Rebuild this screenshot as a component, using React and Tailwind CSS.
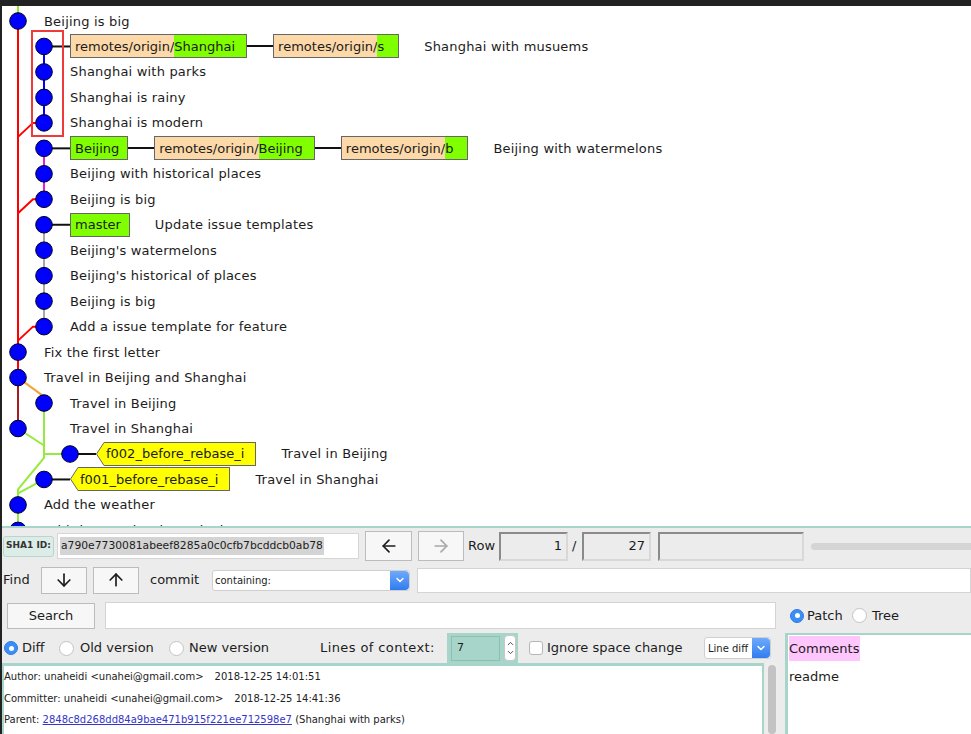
import { ArrowLeft, ArrowRight, ArrowDown, ArrowUp, ChevronDown, ChevronUp } from 'lucide-react';

// graph geometry (local to the graph pane)
const PITCH = 25.47;
const X0 = 16;
const X1 = 42;
const X2 = 68;
const LANES = [X0, X1, X2];
const y = (i) => 15 + PITCH * i;

const rows = [
  { lane: 0, pl: 'pl-[42px]', text: 'Beijing is big' },
  {
    lane: 1,
    pl: 'pl-[68px]',
    refs: [
      { t: 'remote', a: 'remotes/origin/', b: 'Shanghai' },
      { t: 'remote', a: 'remotes/origin/', b: 's' },
    ],
    text: 'Shanghai with musuems',
  },
  { lane: 1, pl: 'pl-[68px]', text: 'Shanghai with parks' },
  { lane: 1, pl: 'pl-[68px]', text: 'Shanghai is rainy' },
  { lane: 1, pl: 'pl-[68px]', text: 'Shanghai is modern' },
  {
    lane: 1,
    pl: 'pl-[68px]',
    refs: [
      { t: 'head', b: 'Beijing' },
      { t: 'remote', a: 'remotes/origin/', b: 'Beijing' },
      { t: 'remote', a: 'remotes/origin/', b: 'b' },
    ],
    text: 'Beijing with watermelons',
  },
  { lane: 1, pl: 'pl-[68px]', text: 'Beijing with historical places' },
  { lane: 1, pl: 'pl-[68px]', text: 'Beijing is big' },
  { lane: 1, pl: 'pl-[68px]', refs: [{ t: 'head', b: 'master' }], text: 'Update issue templates' },
  { lane: 1, pl: 'pl-[68px]', text: "Beijing's watermelons" },
  { lane: 1, pl: 'pl-[68px]', text: "Beijing's historical of places" },
  { lane: 1, pl: 'pl-[68px]', text: 'Beijing is big' },
  { lane: 1, pl: 'pl-[68px]', text: 'Add a issue template for feature' },
  { lane: 0, pl: 'pl-[42px]', text: 'Fix the first letter' },
  { lane: 0, pl: 'pl-[42px]', text: 'Travel in Beijing and Shanghai' },
  { lane: 1, pl: 'pl-[68px]', text: 'Travel in Beijing' },
  { lane: 0, pl: 'pl-[68px]', text: 'Travel in Shanghai' },
  { lane: 2, pl: 'pl-[94px]', refs: [{ t: 'tag', b: 'f002_before_rebase_i' }], text: 'Travel in Beijing' },
  { lane: 1, pl: 'pl-[68px]', refs: [{ t: 'tag', b: 'f001_before_rebase_i' }], text: 'Travel in Shanghai' },
  { lane: 0, pl: 'pl-[42px]', text: 'Add the weather' },
  { lane: 0, pl: 'pl-[42px]', text: 'Add the weather in each city' },
];

function join(i) {
  return `M${X1} ${y(i)} H${X1 - 11} L${X0} ${y(i) + 14}`;
}

function GraphLines() {
  return (
    <svg className="absolute left-0 top-0" width="110" height="520">
      <g fill="none" strokeWidth="2">
        <path d={`M${X0} 0 V${y(0)}`} stroke="#9be23a" />
        <path d={`M${X0} ${y(0)} V${y(14)}`} stroke="#ff0000" />
        <path d={join(4)} stroke="#ff0000" />
        <path d={join(7)} stroke="#ff0000" />
        <path d={join(12)} stroke="#ff0000" />
        <path d={`M${X1} ${y(1)} V${y(4)}`} stroke="#0000ff" />
        <path d={`M${X1} ${y(5)} V${y(7)}`} stroke="#e020e0" />
        <path d={`M${X1} ${y(8)} V${y(12)}`} stroke="#a8a8a8" />
        <path d={`M${X0} ${y(14)} V${y(16)}`} stroke="#a51d1d" />
        <path d={`M${X0} ${y(14)} L${X1} ${y(14) + 19} V${y(15)}`} stroke="#f4a53a" />
        <path d={`M${X1} ${y(15)} V${y(17) + 4} L${X0} ${y(18) + 10} V520`} stroke="#96ea3c" />
        <path d={`M${X0} ${y(16)} L${X1} ${y(16) + 17}`} stroke="#96ea3c" />
        <path d={`M${X2} ${y(17)} H${X1}`} stroke="#96ea3c" />
        <path d={`M${X1} ${y(18)} L${X0} ${y(18) + 14}`} stroke="#96ea3c" />
        <g stroke="#111">
          <path d={`M${X1} ${y(1)} H68`} />
          <path d={`M${X1} ${y(5)} H68`} />
          <path d={`M${X1} ${y(8)} H68`} />
          <path d={`M${X2} ${y(17)} H94`} />
          <path d={`M${X1} ${y(18)} H68`} />
        </g>
      </g>
      {rows.map((r, i) => (
        <circle key={i} cx={LANES[r.lane]} cy={y(i)} r="8.3" fill="#0000ff" stroke="#000022" strokeWidth="1" />
      ))}
    </svg>
  );
}

function Ref({ r }) {
  if (r.t === 'head') {
    return (
      <div className="flex h-[24px] items-center border border-[#666] bg-[#80ff00] pl-[4px] pr-[8px]">{r.b}</div>
    );
  }
  if (r.t === 'tag') {
    return (
      <div className="flex h-[24px]">
        <svg width="8" height="24" className="shrink-0">
          <polygon points="8,0 0.5,12 8,24" fill="#ffff00" />
          <polyline points="8,0.5 0.5,12 8,23.5" fill="none" stroke="#666" strokeWidth="1" />
        </svg>
        <div className="flex items-center border-y border-r border-[#666] bg-[#ffff00] pl-[2px] pr-[11px]">{r.b}</div>
      </div>
    );
  }
  return (
    <div className="flex h-[24px] border border-[#666]">
      <span className="flex items-center bg-[#fdd8a8] pl-[4px]">{r.a}</span>
      <span className={`flex items-center bg-[#80ff00] ${r.b.length === 1 ? 'pr-[14px]' : 'pr-[11px]'}`}>{r.b}</span>
    </div>
  );
}

function Graph() {
  return (
    <div className="relative h-[520px] shrink-0 overflow-hidden bg-white pt-[2.27px] text-[13px] leading-none text-[#1c1c1c]">
      <GraphLines />
      {rows.map((r, i) => (
        <div key={i} className={`flex h-[25.47px] items-center whitespace-nowrap ${r.pl}`}>
          {r.refs &&
            r.refs.map((ref, j) => (
              <div key={j} className="flex items-center">
                {j > 0 && <div className="h-[2px] w-[26px] bg-[#111]" />}
                <Ref r={ref} />
              </div>
            ))}
          <span className={r.refs ? 'ml-[25px] tracking-[0.2px]' : 'tracking-[0.2px]'}>{r.text}</span>
        </div>
      ))}
      {/* red highlight box drawn over the Shanghai commits */}
      <div className="absolute left-[29px] top-[24px] h-[107px] w-[33px] border-2 border-[#ee3a3a]" />
    </div>
  );
}

function Btn({ className, children }) {
  return (
    <div className={`flex shrink-0 items-center justify-center border border-[#bcbcbc] bg-[#f7f7f7] ${className}`}>
      {children}
    </div>
  );
}

function Radio({ on }) {
  if (on) {
    return (
      <div className="flex h-[14px] w-[14px] shrink-0 items-center justify-center rounded-full border border-[#2f7be0] bg-[#3b8ef6]">
        <div className="h-[5px] w-[5px] rounded-full bg-white" />
      </div>
    );
  }
  return <div className="h-[15px] w-[15px] shrink-0 rounded-full border border-[#c3c3c3] bg-white" />;
}

function BlueChevron({ className }) {
  return (
    <div className={`flex items-center justify-center rounded-r-[4px] bg-gradient-to-b from-[#6eaafb] to-[#2f7cf0] ${className}`}>
      <ChevronDown size={12} strokeWidth={3} color="#ffffff" />
    </div>
  );
}

function Sunken({ className, children }) {
  return (
    <div className={`flex h-[29px] shrink-0 items-center justify-end border-2 border-[#8a8a8a] border-r-[#d8d8d8] border-b-[#d8d8d8] bg-[#ececec] text-[13px] ${className}`}>
      {children}
    </div>
  );
}

function Panel() {
  return (
    <div className="flex flex-1 min-h-0 flex-col border-t-2 border-[#a8d5c9] bg-[#ececec] text-[13px] text-[#1c1c1c]">
      {/* sha / row */}
      <div className="flex h-[36px] shrink-0 items-center">
        <div className="ml-[1px] flex h-[21px] w-[51px] shrink-0 items-center justify-center rounded-[3px] border border-[#b9d6cc] bg-[#dcece6] text-[9px] font-bold text-[#333]">
          SHA1 ID:
        </div>
        <div className="ml-[3px] flex h-[26px] w-[302px] shrink-0 items-center border border-[#d6d6d6] bg-white pl-[2px]">
          <span className="bg-[#d4d4d4] px-[1px] text-[10.75px] leading-[18px]">a790e7730081abeef8285a0c0cfb7bcddcb0ab78</span>
        </div>
        <Btn className="ml-[6px] h-[30px] w-[47px]">
          <ArrowLeft size={20} strokeWidth={2} />
        </Btn>
        <Btn className="ml-[6px] h-[30px] w-[46px] text-[#a8a8a8]">
          <ArrowRight size={20} strokeWidth={2} />
        </Btn>
        <span className="ml-[4px] w-[31px] shrink-0">Row</span>
        <Sunken className="w-[69px] pr-[4px]">1</Sunken>
        <span className="w-[14px] shrink-0 pl-[4px]">/</span>
        <Sunken className="w-[69px] pr-[4px]">27</Sunken>
        <Sunken className="ml-[7px] w-[146px]" />
        <div className="ml-[7px] h-[7px] flex-1 rounded-l-full bg-[#d5d5d5]" />
      </div>

      {/* find */}
      <div className="flex h-[32px] shrink-0 items-center">
        <span className="ml-[1px] w-[38px] shrink-0">Find</span>
        <Btn className="h-[27px] w-[46px]">
          <ArrowDown size={20} strokeWidth={2} />
        </Btn>
        <Btn className="ml-[6px] h-[27px] w-[46px]">
          <ArrowUp size={20} strokeWidth={2} />
        </Btn>
        <span className="ml-[11px] w-[62px] shrink-0">commit</span>
        <div className="flex h-[21px] w-[198px] shrink-0 rounded-[3px] border border-[#cfcfcf] bg-white">
          <span className="flex flex-1 items-center pl-[2px] text-[10px]">containing:</span>
          <BlueChevron className="w-[19px]" />
        </div>
        <div className="ml-[7px] h-[25px] flex-1 border border-[#d4d4d4] bg-white" />
      </div>

      <div className="flex flex-1 min-h-0">
        {/* left column */}
        <div className="flex w-[781px] shrink-0 flex-col">
          <div className="flex h-[37px] shrink-0 items-center pt-[2px]">
            <Btn className="ml-[5px] h-[26px] w-[88px]">Search</Btn>
            <div className="ml-[10px] h-[27px] w-[671px] border border-[#d4d4d4] bg-white" />
          </div>

          <div className="flex h-[30px] shrink-0 items-center">
            <div className="ml-[2px]">
              <Radio on />
            </div>
            <span className="ml-[4px] w-[37px] shrink-0">Diff</span>
            <Radio />
            <span className="ml-[6px] w-[89px] shrink-0">Old version</span>
            <Radio />
            <span className="ml-[5px] w-[131px] shrink-0">New version</span>
            <span className="w-[127px] shrink-0 tracking-[0.4px]">Lines of context:</span>
            <div className="flex h-full w-[71px] shrink-0 items-center bg-[#a8d5c9] pl-[4px]">
              <div className="flex h-[25px] w-[49px] items-center border border-[#8fbfb2] bg-[#a8d5c9] pl-[5px] text-[11px]">7</div>
              <div className="ml-[4px] flex h-[26px] w-[12px] flex-col items-center justify-center rounded-[4px] border border-[#c8c8c8] bg-white text-[#444]">
                <ChevronUp size={9} strokeWidth={2.5} />
                <ChevronDown size={9} strokeWidth={2.5} />
              </div>
            </div>
            <div className="ml-[11px] h-[14px] w-[14px] shrink-0 rounded-[3px] border border-[#b5b5b5] bg-white" />
            <span className="ml-[4px] w-[157px] shrink-0">Ignore space change</span>
            <div className="flex h-[22px] w-[67px] shrink-0 rounded-[3px] border border-[#cfcfcf] bg-white">
              <span className="flex flex-1 items-center pl-[3px] text-[10px]">Line diff</span>
              <BlueChevron className="w-[18px]" />
            </div>
          </div>

          <div className="flex flex-1 min-h-0">
            <div className="w-[762px] shrink-0 border-x-2 border-t-[3px] border-[#a8d5c9] bg-white text-[10px] leading-[21.5px] text-[#222]">
              <div className="whitespace-pre">
                Author: unaheidi &lt;unahei@gmail.com&gt;<span className="ml-[11px]">2018-12-25 14:01:51</span>
              </div>
              <div className="whitespace-pre">
                Committer: unaheidi &lt;unahei@gmail.com&gt;<span className="ml-[11px]">2018-12-25 14:41:36</span>
              </div>
              <div className="whitespace-pre">
                Parent: <span className="text-[#3535c8] underline">2848c8d268dd84a9bae471b915f221ee712598e7</span> (Shanghai with parks)
              </div>
            </div>
            <div className="ml-[2px] flex w-[11px] shrink-0 justify-center bg-[#eeeeee] pt-[2px]">
              <div className="h-full w-[8px] rounded-full bg-[#c3c3c3]" />
            </div>
          </div>
        </div>

        {/* right column */}
        <div className="flex flex-1 min-w-0 flex-col">
          <div className="flex h-[37px] shrink-0 items-center pt-[2px]">
            <div className="ml-[7px]">
              <Radio on />
            </div>
            <span className="ml-[3px] w-[45px] shrink-0">Patch</span>
            <Radio />
            <span className="ml-[5px]">Tree</span>
          </div>
          <div className="ml-[2px] flex-1 border-l-[3px] border-t-2 border-[#a8d5c9] bg-white pl-[1px] pt-[1px]">
            <div className="inline-flex h-[25px] items-center bg-[#ffc6fe] pr-[1px]">Comments</div>
            <div className="mt-[7px] leading-[18px]">readme</div>
          </div>
        </div>
      </div>
    </div>
  );
}

export default function App() {
  return (
    <div className="flex h-[734px] w-[971px] overflow-hidden bg-[#222] font-['DejaVu_Sans',sans-serif]">
      <div className="w-[2px] shrink-0" />
      <div className="flex flex-1 min-w-0 flex-col">
        <div className="h-[6px] shrink-0" />
        <Graph />
        <Panel />
      </div>
    </div>
  );
}
